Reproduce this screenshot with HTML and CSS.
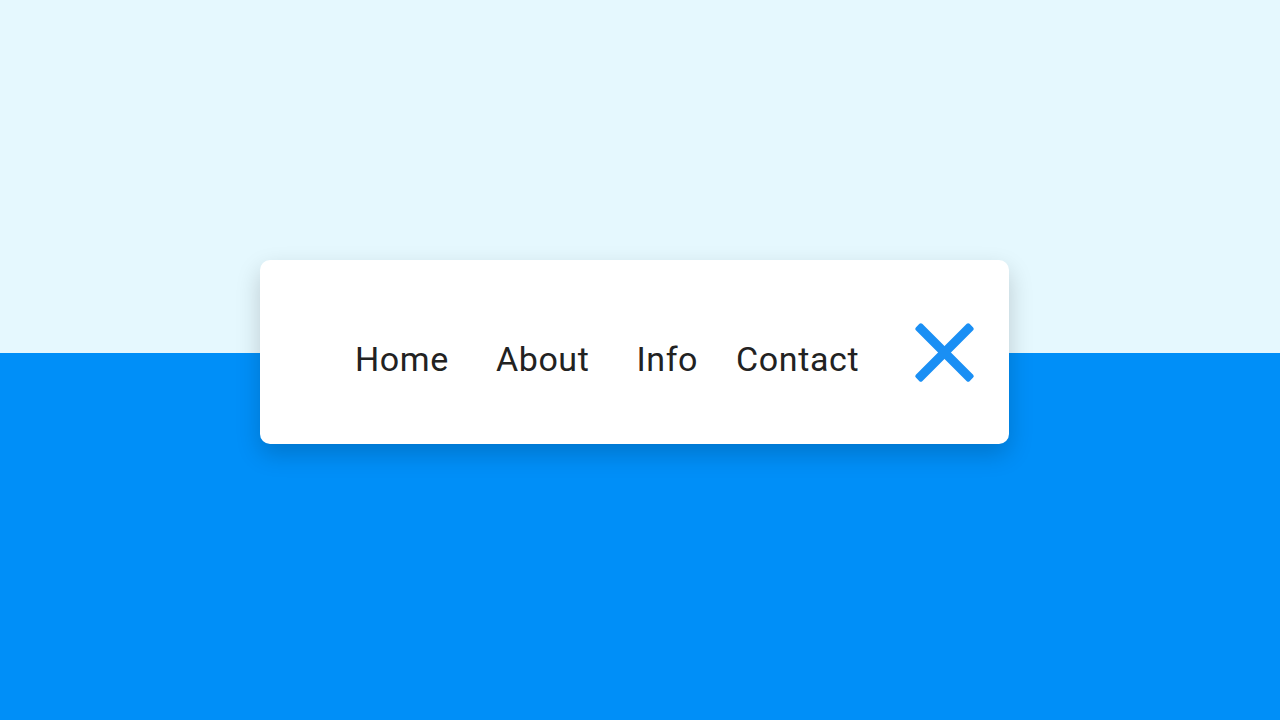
FILE: index.html
```html
<!DOCTYPE html>
<html lang="en">
<head>
  <meta charset="UTF-8">
  <meta name="viewport" content="width=device-width, initial-scale=1.0">
  <title>Menu</title>
  <link rel="stylesheet" href="styles.css">
</head>
<body>

  <!-- Navigation card -->
  <div class="menu">
    <ul class="menu-links">
      <li><a href="#">Home</a></li>
      <li><a href="#">About</a></li>
      <li><a href="#">Info</a></li>
      <li class="last-link"><a href="#">Contact</a></li>
    </ul>
    <button class="close-button" aria-label="Close menu">
      <svg width="61" height="61" viewBox="0 0 61 61">
        <g fill="#1a8ff4">
          <rect x="-7.5" y="26" width="76" height="9" rx="2" transform="rotate(45 30.5 30.5)"/>
          <rect x="-7.5" y="26" width="76" height="9" rx="2" transform="rotate(-45 30.5 30.5)"/>
        </g>
      </svg>
    </button>
  </div>

</body>
</html>
```

FILE: styles.css
```css
body {
  font-family: 'Roboto', 'Liberation Sans', sans-serif;
  background: linear-gradient(to bottom, #e5f8fe 49%, #008ff8 49%);
  display: flex;
  justify-content: center;
  align-items: center;
  height: 100vh;
  margin: 0;
}

.menu {
  display: flex;
  align-items: center;
  width: 749px;
  height: 184px;
  box-sizing: border-box;
  padding-left: 95px;
  margin: 0 11px 16px 0;
  background-color: #ffffff;
  border-radius: 10px;
  box-shadow: 0 10px 25px rgba(0, 0, 0, 0.18);
}

.menu-links {
  display: flex;
  list-style: none;
  margin: 14px 0 0 0;
  padding: 0;
  gap: 47px;
}

.menu-links a {
  color: #222;
  text-decoration: none;
  font-size: 34px;
  letter-spacing: 0.6px;
}

.menu-links .last-link {
  margin-left: -9px;
}

.close-button {
  margin-left: auto;
  margin-right: 34px;
  padding: 0;
  border: none;
  background: none;
  cursor: pointer;
  display: flex;
}
```
